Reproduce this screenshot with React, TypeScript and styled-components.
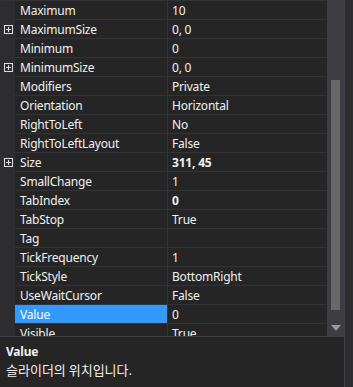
import React from "react";
import styled, { createGlobalStyle } from "styled-components";

const Global = createGlobalStyle`
  html, body {
    margin: 0;
    padding: 0;
    background: #252526;
  }
  * { box-sizing: border-box; }
`;

type Prop = {
  name: string;
  value: string;
  expandable?: boolean;
  bold?: boolean;
  selected?: boolean;
};

const props: Prop[] = [
  { name: "Maximum", value: "10" },
  { name: "MaximumSize", value: "0, 0", expandable: true },
  { name: "Minimum", value: "0" },
  { name: "MinimumSize", value: "0, 0", expandable: true },
  { name: "Modifiers", value: "Private" },
  { name: "Orientation", value: "Horizontal" },
  { name: "RightToLeft", value: "No" },
  { name: "RightToLeftLayout", value: "False" },
  { name: "Size", value: "311, 45", expandable: true, bold: true },
  { name: "SmallChange", value: "1" },
  { name: "TabIndex", value: "0", bold: true },
  { name: "TabStop", value: "True" },
  { name: "Tag", value: "" },
  { name: "TickFrequency", value: "1" },
  { name: "TickStyle", value: "BottomRight" },
  { name: "UseWaitCursor", value: "False" },
  { name: "Value", value: "0", selected: true },
  { name: "Visible", value: "True" },
];

export default function App() {
  return (
    <>
      <Global />
      <Window>
        <Panel>
          <GridArea>
            <Rows>
              {props.map((p) => (
                <Row key={p.name}>
                  <Gutter>{p.expandable && <PlusBox />}</Gutter>
                  <NameCell $selected={p.selected}>{p.name}</NameCell>
                  <ValueCell $bold={p.bold}>{p.value}</ValueCell>
                </Row>
              ))}
            </Rows>
            <ScrollBar>
              <Thumb />
              <DownArrow>
                <svg width="10" height="6" viewBox="0 0 10 6">
                  <path d="M0 0 L10 0 L5 6 Z" fill="#9a9a9a" />
                </svg>
              </DownArrow>
            </ScrollBar>
          </GridArea>
          <Description>
            <DescTitle>Value</DescTitle>
            <DescText>슬라이더의 위치입니다.</DescText>
          </Description>
        </Panel>
        <Edge />
      </Window>
    </>
  );
}

function PlusBox() {
  return (
    <svg width="9" height="9" viewBox="0 0 9 9">
      <rect x="0.5" y="0.5" width="8" height="8" fill="none" stroke="#e0e0e0" />
      <path d="M2 4.5 H7 M4.5 2 V7" stroke="#e0e0e0" />
    </svg>
  );
}

const Window = styled.div`
  width: 353px;
  height: 387px;
  display: flex;
  overflow: hidden;
  font-family: "Noto Sans", "Segoe UI", sans-serif;
  font-size: 12px;
  letter-spacing: -0.2px;
  color: #f1f1f1;
`;

const Panel = styled.div`
  width: 345px;
  display: flex;
  flex-direction: column;
  border-right: 1px solid #3f3f46;
`;

const Edge = styled.div`
  flex: 1;
  background: #2d2d30;
`;

const GridArea = styled.div`
  height: 337px;
  display: flex;
  overflow: hidden;
  border-bottom: 1px solid #3f3f46;
`;

const Rows = styled.div`
  width: 328px;
  display: flex;
  flex-direction: column;
  background: #2d2d30;
  border-top: 1px solid #333337;
`;

const Row = styled.div`
  height: 19px;
  flex-shrink: 0;
  display: flex;
`;

const Gutter = styled.div`
  width: 15px;
  display: flex;
  align-items: center;
  justify-content: center;
  padding-left: 1px;
  background: #2d2d30;
`;

const NameCell = styled.div<{ $selected?: boolean }>`
  width: 153px;
  padding-left: 5px;
  display: flex;
  align-items: center;
  white-space: nowrap;
  overflow: hidden;
  background: ${(p) => (p.$selected ? "#3399ff" : "#252526")};
  color: ${(p) => (p.$selected ? "#ffffff" : "#f1f1f1")};
  border-bottom: 1px solid #333337;
  border-right: 1px solid #333337;
`;

const ValueCell = styled.div<{ $bold?: boolean }>`
  flex: 1;
  padding-left: 4px;
  display: flex;
  align-items: center;
  white-space: nowrap;
  background: #252526;
  font-weight: ${(p) => (p.$bold ? 700 : 400)};
  border-bottom: 1px solid #333337;
`;

const ScrollBar = styled.div`
  width: 17px;
  background: #3e3e42;
  position: relative;
`;

const Thumb = styled.div`
  position: absolute;
  left: 4px;
  top: 80px;
  width: 9px;
  height: 230px;
  background: #686868;
`;

const DownArrow = styled.div`
  position: absolute;
  left: 4px;
  top: 325px;
  width: 10px;
  height: 6px;
  display: flex;
`;

const Description = styled.div`
  flex: 1;
  background: #252526;
  padding: 6px 6px 0;
  display: flex;
  flex-direction: column;
`;

const DescTitle = styled.div`
  font-weight: 700;
  line-height: 18px;
`;

const DescText = styled.div`
  font-family: "Noto Sans CJK KR", "Noto Sans", sans-serif;
  font-size: 13px;
  letter-spacing: 0;
  line-height: 18px;
`;
